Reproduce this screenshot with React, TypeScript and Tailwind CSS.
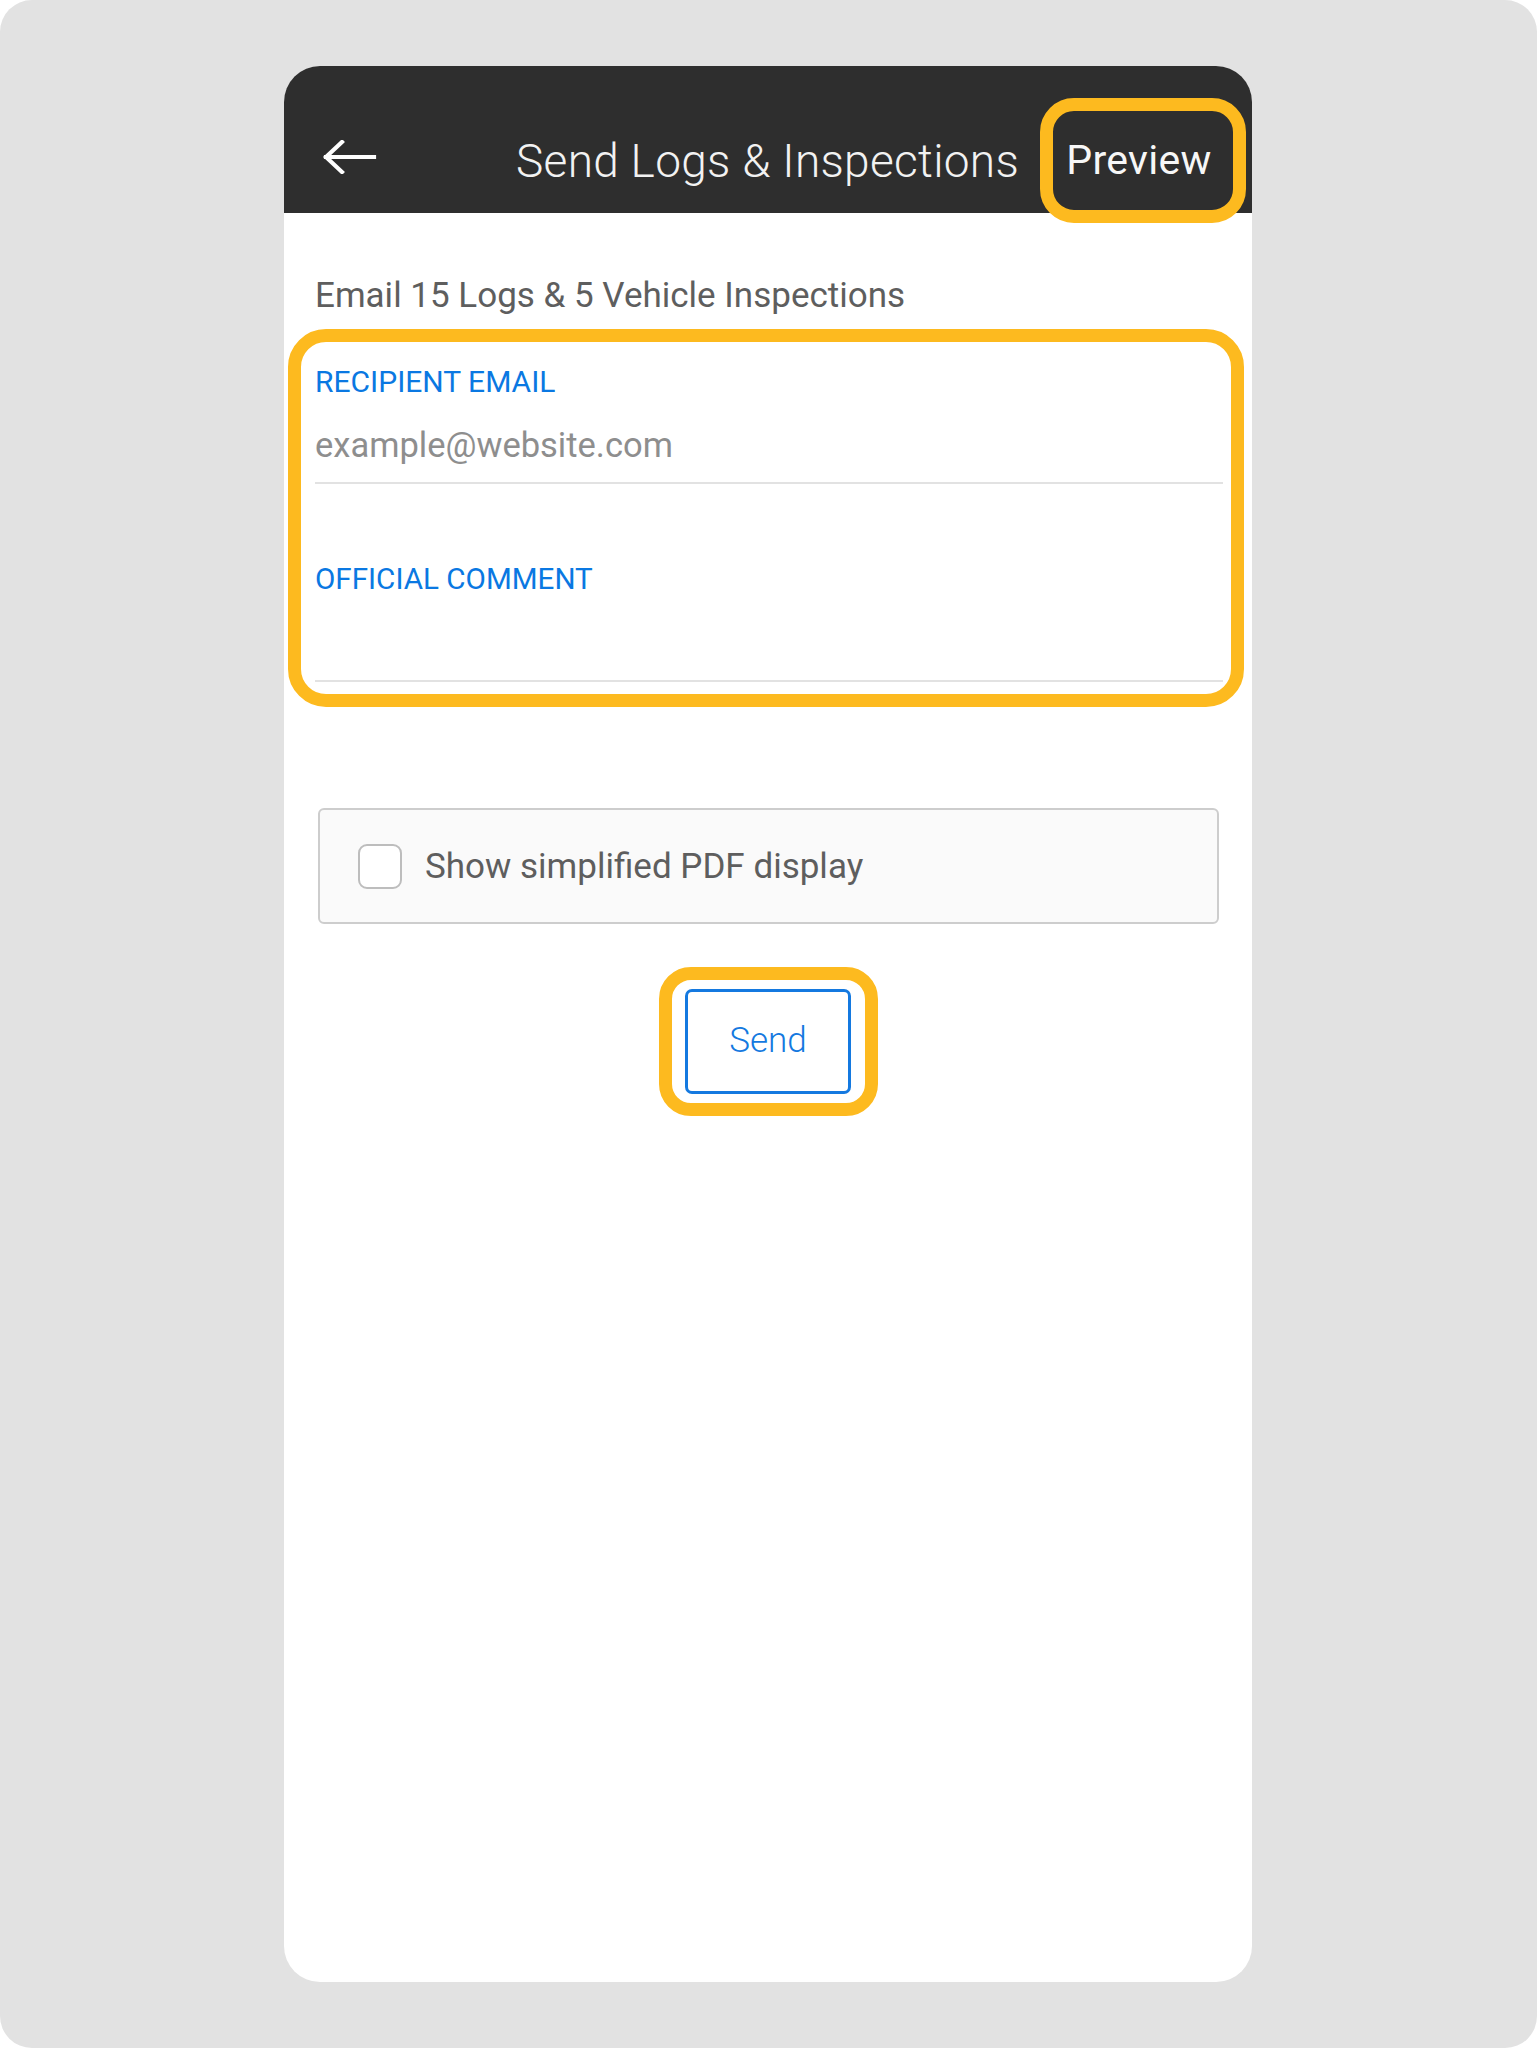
import React from "react";

const font = { fontFamily: "Roboto, 'Noto Sans', Arial, sans-serif" };

function BackArrow() {
  return (
    <svg width="54" height="34" viewBox="0 0 54 34" fill="none" stroke="white" strokeWidth="4.2" strokeLinecap="square">
      <path d="M3 17 H51" />
      <path d="M19 2 L3 17 L19 32" strokeLinejoin="miter" />
    </svg>
  );
}

export default function App() {
  return (
    <div className="min-h-screen bg-white" style={font}>
      <div className="flex h-[2048px] w-[1537px] flex-col rounded-[32px] bg-[#e2e2e2] pt-[66px]">
        {/* phone */}
        <div className="ml-[284px] flex h-[1916px] w-[968px] flex-col overflow-hidden rounded-[36px] bg-white">
          {/* header */}
          <header className="flex h-[147px] shrink-0 items-center bg-[#2e2e2e] pt-[42px]">
            <div className="ml-[39px] mb-[7px]">
              <BackArrow />
            </div>
            <h1 className="ml-[139px] whitespace-nowrap text-[46px] font-light leading-none tracking-[0.3px] text-[#f2f2f2]">
              Send Logs &amp; Inspections
            </h1>
            <div className="relative z-10 ml-auto mr-[6px] flex h-[125px] w-[206px] shrink-0 items-center justify-center rounded-[34px] border-[13px] border-[#fdba1f] bg-[#2e2e2e] pr-[8px]">
              <span className="text-[41px] leading-none tracking-[0.3px] text-[#f7f7f7]">Preview</span>
            </div>
          </header>

          {/* body */}
          <div className="flex flex-col">
            <p className="ml-[31px] mt-[62px] text-[35px] leading-[42px] text-[#5e5e5e]">
              Email 15 Logs &amp; 5 Vehicle Inspections
            </p>

            <div className="ml-[4px] mt-[12px] flex h-[378px] w-[956px] flex-col rounded-[38px] border-[13px] border-[#fdba1f] pl-[14px] pr-[8px] pt-[23px]">
              <label className="text-[30px] leading-[34px] text-[#0a78e2]">RECIPIENT EMAIL</label>
              <div className="mt-[27px] text-[34.5px] leading-[38px] text-[#8e8e8e]">example@website.com</div>
              <div className="mt-[18px] h-[2px] bg-[#e2e2e2]" />
              <label className="mt-[78px] text-[29.6px] leading-[34px] text-[#0a78e2]">OFFICIAL COMMENT</label>
              <div className="mt-[84px] h-[2px] bg-[#e2e2e2]" />
            </div>

            <div className="ml-[34px] mt-[101px] flex h-[116px] w-[901px] items-center rounded-[6px] border-2 border-[#cdcdcd] bg-[#fafafa] pl-[38px]">
              <div className="h-[45px] w-[44px] rounded-[9px] border-2 border-[#bdbdbd] bg-white" />
              <span className="ml-[23px] text-[35px] leading-none text-[#5e5e5e]">Show simplified PDF display</span>
            </div>

            <div className="mx-auto mt-[43px] flex h-[149px] w-[219px] items-center justify-center rounded-[32px] border-[13px] border-[#fdba1f]">
              <button className="flex h-[105px] w-[166px] items-center justify-center rounded-[7px] border-[3px] border-[#1479e0] bg-white text-[35px] font-light text-[#1479e0]">
                Send
              </button>
            </div>
          </div>
        </div>
      </div>
    </div>
  );
}
